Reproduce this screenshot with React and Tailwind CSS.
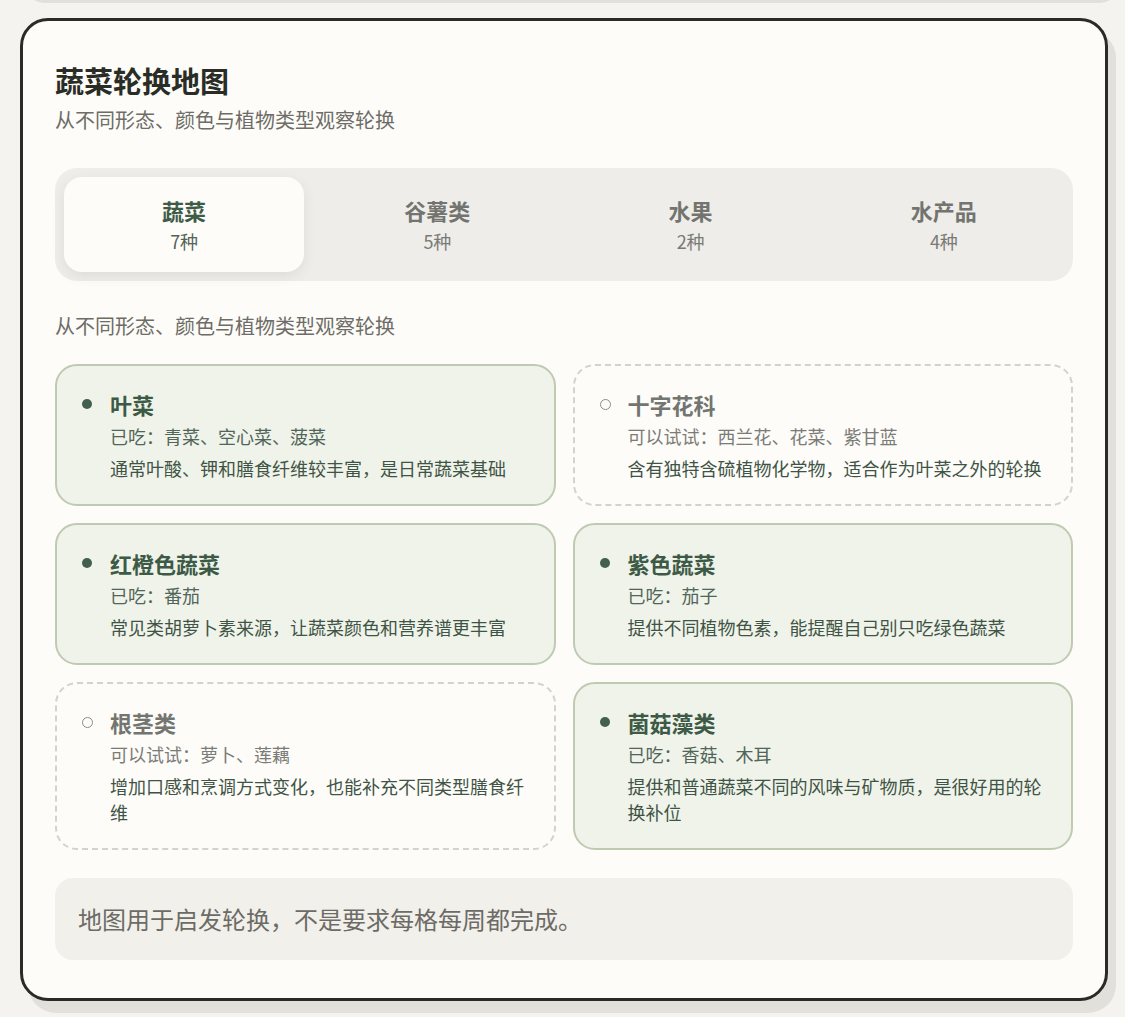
import { useState } from 'react'

const tabs = [
  { id: 'veg', label: '蔬菜', count: '7种' },
  { id: 'grain', label: '谷薯类', count: '5种' },
  { id: 'fruit', label: '水果', count: '2种' },
  { id: 'aqua', label: '水产品', count: '4种' },
]

const groups = [
  {
    name: '叶菜',
    eaten: true,
    items: '青菜、空心菜、菠菜',
    note: '通常叶酸、钾和膳食纤维较丰富，是日常蔬菜基础',
  },
  {
    name: '十字花科',
    eaten: false,
    items: '西兰花、花菜、紫甘蓝',
    note: '含有独特含硫植物化学物，适合作为叶菜之外的轮换',
  },
  {
    name: '红橙色蔬菜',
    eaten: true,
    items: '番茄',
    note: '常见类胡萝卜素来源，让蔬菜颜色和营养谱更丰富',
  },
  {
    name: '紫色蔬菜',
    eaten: true,
    items: '茄子',
    note: '提供不同植物色素，能提醒自己别只吃绿色蔬菜',
  },
  {
    name: '根茎类',
    eaten: false,
    items: '萝卜、莲藕',
    note: '增加口感和烹调方式变化，也能补充不同类型膳食纤维',
  },
  {
    name: '菌菇藻类',
    eaten: true,
    items: '香菇、木耳',
    note: '提供和普通蔬菜不同的风味与矿物质，是很好用的轮换补位',
  },
]

const GroupCard = ({ group }) => {
  const { name, eaten, items, note } = group
  return (
    <div
      className={
        eaten
          ? 'flex gap-[17px] rounded-[22px] border-2 border-[#bfcab3] bg-[#eff3e9] pl-[25px] pr-6 pt-[23px] pb-[23px]'
          : 'flex gap-[17px] rounded-[22px] border-2 border-dashed border-[#d3d2cd] bg-[#fdfcf8] pl-[25px] pr-6 pt-[23px] pb-[23px]'
      }
    >
      <div className="flex h-[30px] w-[11px] shrink-0 items-center">
        {eaten ? (
          <span className="block h-[10px] w-[10px] rounded-full bg-[#42604b]" />
        ) : (
          <span className="block h-[11px] w-[11px] rounded-full border-[1.5px] border-[#8d8d88]" />
        )}
      </div>
      <div className="min-w-0 flex-1">
        <div className={eaten ? 'text-[22px] font-bold leading-[30px] text-[#3c5a45]' : 'text-[22px] font-bold leading-[30px] text-[#737570]'}>
          {name}
        </div>
        <div className={eaten ? 'mt-1 text-[18px] leading-[26px] text-[#51655a]' : 'mt-1 text-[18px] leading-[26px] text-[#7b7b77]'}>
          {eaten ? '已吃：' : '可以试试：'}
          {items}
        </div>
        <p className="mt-1.5 text-[18px] leading-[26px] text-[#3f5446]">{note}</p>
      </div>
    </div>
  )
}

const App = () => {
  const [active, setActive] = useState('veg')

  return (
    <div
      className="min-h-screen overflow-hidden bg-[#f4f3ef] pl-5 pr-[17px]"
      style={{ fontFamily: '"Noto Sans CJK SC", "Noto Sans", sans-serif' }}
    >
      {/* previous card, mostly scrolled off */}
      <div className="-mt-[40px] h-[31px] rounded-[28px] border-[3px] border-[#2b2a26] bg-[#fdfcf8] shadow-[8px_12px_0_#e1e0db]" />

      <div className="mt-[27px] rounded-[28px] border-[3px] border-[#2b2a26] bg-[#fdfcf8] px-8 pt-[38px] pb-[38px] shadow-[8px_12px_0_#e1e0db]">
        <h1 className="text-[29px] font-bold leading-[42px] text-[#2a2c26]">蔬菜轮换地图</h1>
        <p className="mt-[5px] text-[20px] leading-[28px] text-[#6d6c67]">从不同形态、颜色与植物类型观察轮换</p>

        {/* category tabs */}
        <div className="mt-[34px] grid grid-cols-4 gap-[13px] rounded-[22px] bg-[#eeede9] p-[9px]">
          {tabs.map(tab => {
            const isActive = tab.id === active
            return (
              <button
                key={tab.id}
                onClick={() => setActive(tab.id)}
                className={
                  isActive
                    ? 'flex h-[95px] flex-col items-center justify-center rounded-[18px] bg-[#fdfcf8] shadow-[0_4px_14px_rgba(0,0,0,0.07)]'
                    : 'flex h-[95px] flex-col items-center justify-center rounded-[18px]'
                }
              >
                <span className={isActive ? 'text-[22px] font-bold leading-[30px] text-[#3e5b47]' : 'text-[22px] font-bold leading-[30px] text-[#73746f]'}>
                  {tab.label}
                </span>
                <span className={isActive ? 'mt-[3px] text-[18px] leading-[26px] text-[#55645a]' : 'mt-[3px] text-[18px] leading-[26px] text-[#7a7a75]'}>
                  {tab.count}
                </span>
              </button>
            )
          })}
        </div>

        <p className="mt-[31px] text-[20px] leading-[28px] text-[#6d6c67]">从不同形态、颜色与植物类型观察轮换</p>

        <div className="mt-[24px] grid grid-cols-2 gap-[17px]">
          {groups.map(group => (
            <GroupCard key={group.name} group={group} />
          ))}
        </div>

        <div className="mt-[28px] rounded-[18px] bg-[#f2f0eb] px-[23px] py-[23px]">
          <p className="text-[24px] leading-[36px] text-[#6c6b66]">地图用于启发轮换，不是要求每格每周都完成。</p>
        </div>
      </div>
    </div>
  )
}

export default App
